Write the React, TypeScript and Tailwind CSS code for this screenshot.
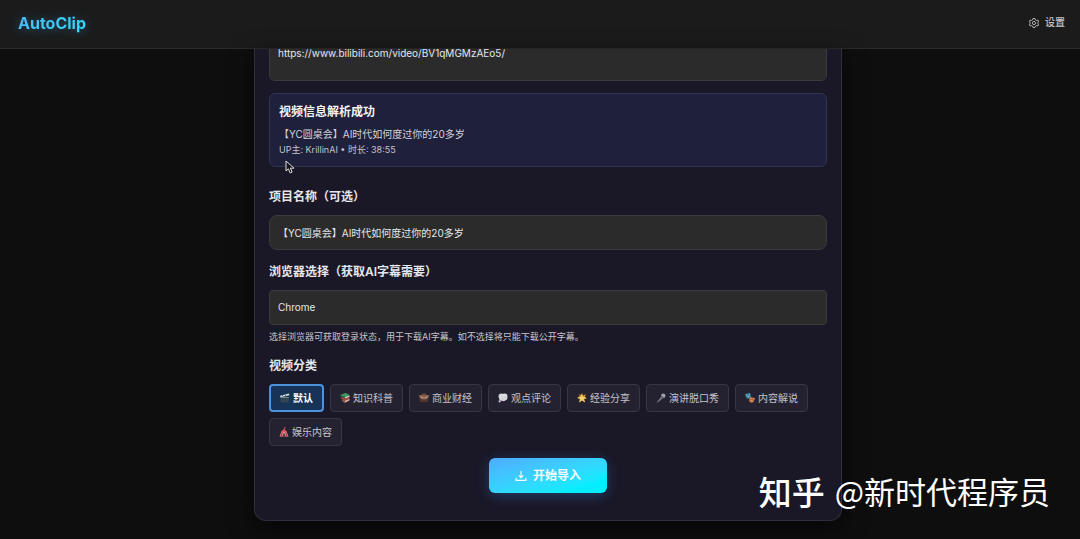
import type { ReactNode } from "react";

const field =
  "block w-full border border-[#3b3b3d] bg-[#2b2b2b] px-2 text-[10px] text-gray-200 outline-none";

function Icon({ children }: { children: ReactNode }) {
  return (
    <svg viewBox="0 0 18 18" className="h-[10px] w-[10px] shrink-0" aria-hidden="true">
      {children}
    </svg>
  );
}

const categories = [
  {
    name: "默认",
    icon: (
      <Icon>
        <path d="M0 5 16 1l1 3L1 8z" fill="#d5dce0" />
        <path d="m4 4 2 3m3-4 2 3" stroke="#34444f" strokeWidth="1.5" />
        <path d="M1 8h15v7l-2 2H3l-2-2z" fill="#33454e" />
        <path d="M1 8h15v1H1z" fill="#a9bcc2" />
      </Icon>
    ),
  },
  {
    name: "知识科普",
    icon: (
      <Icon>
        <path d="m1 3 9-3 7 3-8 4z" fill="#3f9d62" />
        <path d="m1 3 8 4v3L1 6z" fill="#2b7548" />
        <path d="m9 7 8-3v3l-8 3z" fill="#cfe0d2" />
        <path d="m2 7 7 3 8-3v3l-8 3-7-3z" fill="#b84b42" />
        <path d="m4 11 5 2 8-3v4l-8 4-5-3z" fill="#8b5a50" />
        <path d="m9 14 8-3v2l-8 4z" fill="#dbb5a0" />
      </Icon>
    ),
  },
  {
    name: "商业财经",
    icon: (
      <Icon>
        <path d="M6 4V2h6v2" fill="none" stroke="#6b483e" strokeWidth="2" />
        <path d="M0 4h18l-2 12H2z" fill="#54362f" />
        <path d="M0 4h18l-1 4-8 4-8-4z" fill="#94695c" />
        <path d="M4 7h2v3H4zm8 0h2v3h-2z" fill="#d0b491" />
      </Icon>
    ),
  },
  {
    name: "观点评论",
    icon: (
      <Icon>
        <circle cx="6" cy="6" r="5" fill="#d6d6dc" />
        <circle cx="12" cy="6" r="5" fill="#dedee4" />
        <circle cx="13" cy="9" r="4" fill="#d3d3da" />
        <circle cx="6" cy="10" r="4" fill="#d8d8df" />
        <circle cx="10" cy="11" r="4" fill="#d3d3da" />
        <circle cx="3" cy="15" r="2" fill="#d3d3da" />
      </Icon>
    ),
  },
  {
    name: "经验分享",
    icon: (
      <Icon>
        <path
          d="m9 0 2 5 5-3-2 5 4 3-5 1 2 6-6-4-5 4 1-6-5-2 5-3-2-4 4 2z"
          fill="#d99a38"
        />
        <path d="m9 2 2 5 6 1-5 3 2 6-5-4-5 4 2-6-5-3 6-1z" fill="#f5cf6a" />
      </Icon>
    ),
  },
  {
    name: "演讲脱口秀",
    icon: (
      <Icon>
        <path d="m1 17 9-11 3 3L3 17z" fill="#77777f" />
        <circle cx="13" cy="5" r="4" fill="#a2a2aa" />
        <path d="m9 5 4 4" stroke="#55555e" strokeWidth="2" />
      </Icon>
    ),
  },
  {
    name: "内容解说",
    icon: (
      <Icon>
        <path d="m0 2 9-2 2 7c-1 4-6 5-9 1z" fill="#36819f" />
        <path d="m2 4 2-1m3 0 2-1M4 7l4-1" stroke="#b8dce7" strokeWidth="1.2" />
        <path d="m9 7 9 2-2 6c-2 4-8 3-9-1z" fill="#b9673d" />
        <path d="m10 9 2 1m3 0 2 1m-7 3 4 1" stroke="#ffd298" strokeWidth="1.2" />
      </Icon>
    ),
  },
  {
    name: "娱乐内容",
    icon: (
      <Icon>
        <path d="M9 4V0l4 2-4 1" fill="#e15b62" />
        <path d="m9 3 6 6H3z" fill="#d75b60" />
        <path d="M4 9h10l3 8H1z" fill="#e39a98" />
        <path d="m5 9-3 8h3l2-8zm6 0 2 8h3l-3-8z" fill="#bd3f49" />
        <path d="m9 10 3 7H6z" fill="#563644" />
      </Icon>
    ),
  },
];

function Header() {
  return (
    <header className="flex h-[49px] items-center justify-between border-b border-[#2b2b2b] bg-[#1b1b1b] px-[15px] pb-[3px]">
      <a
        href="#"
        className="ml-[3px] bg-gradient-to-br from-[#50aef8] to-[#18e5f5] bg-clip-text text-[16px] leading-6 font-bold text-transparent drop-shadow-[0_1px_5px_rgba(60,170,255,0.4)]"
      >
        AutoClip
      </a>
      <button type="button" className="flex items-center gap-[6px] text-[10px] font-medium text-[#c4c4c4]">
        <svg
          viewBox="0 0 20 20"
          className="h-[10px] w-[10px]"
          fill="none"
          stroke="currentColor"
          strokeWidth="1.7"
          strokeLinejoin="round"
          aria-hidden="true"
        >
          <path d="M8 1h4l1 3 2 1 3-1 1 4-2 2 2 2-1 4-3-1-2 1-1 3H8l-1-3-2-1-3 1-1-4 2-2-2-2 1-4 3 1 2-1z" />
          <circle cx="10" cy="10" r="3.2" />
        </svg>
        设置
      </button>
    </header>
  );
}

export default function App() {
  return (
    <div className="relative min-h-screen overflow-hidden bg-[#0e0e0e] pb-[18px] font-['Inter','Noto_Sans_CJK_SC',sans-serif]">
      <Header />
      <main className="ml-4 flex justify-center">
        <form className="w-full max-w-[588px] rounded-b-xl border border-t-0 border-[#302e3e] bg-[#1a1726] px-[14px] pb-[27px] shadow-[0_8px_24px_rgba(0,0,0,0.6)]">
          {/* the link field is scrolled half under the header */}
          <div className="flex h-8 flex-col justify-end overflow-hidden">
            <textarea
              aria-label="视频链接"
              defaultValue="https://www.bilibili.com/video/BV1qMGMzAEo5/"
              className={`${field} h-12 shrink-0 resize-none rounded-md py-[11px] leading-4`}
            />
          </div>

          <section className="mt-3 rounded-md border border-[#303354] bg-[#1f203b] px-[9px] py-2">
            <h2 className="text-[12px] leading-5 font-semibold text-gray-100">视频信息解析成功</h2>
            <p className="mt-1 text-[10px] leading-4 text-[#d2d2da]">
              【YC圆桌会】AI时代如何度过你的20多岁
            </p>
            <p className="text-[9px] leading-4 text-[#c3c3ce]">UP主: KrillinAI • 时长: 38:55</p>
          </section>

          <label htmlFor="name" className="mt-5 block text-[12px] leading-5 font-semibold text-gray-200">
            项目名称（可选）
          </label>
          <input
            id="name"
            type="text"
            defaultValue="【YC圆桌会】AI时代如何度过你的20多岁"
            className={`${field} mt-2 h-[35px] rounded-lg`}
          />

          <label htmlFor="browser" className="mt-3 block text-[12px] leading-5 font-semibold text-gray-200">
            浏览器选择（获取AI字幕需要）
          </label>
          <select id="browser" className={`${field} mt-2 h-[35px] appearance-none rounded-sm`}>
            <option>Chrome</option>
          </select>
          <p className="mt-1 text-[9px] leading-4 text-[#c6c6cd]">
            选择浏览器可获取登录状态，用于下载AI字幕。如不选择将只能下载公开字幕。
          </p>

          <h3 className="mt-[11px] text-[12px] leading-5 font-semibold text-gray-200">视频分类</h3>
          <div className="mt-2 flex flex-wrap gap-[6px]">
            {categories.map((c, i) => (
              <button
                key={c.name}
                type="button"
                aria-pressed={i === 0}
                className={`flex h-7 items-center gap-[3px] rounded px-[9px] text-[10px] ${
                  i === 0
                    ? "border-2 border-[#4d91dc] bg-[#183358] font-semibold text-white"
                    : "border border-[#383645] bg-[#242230] text-[#c5c4cc]"
                }`}
              >
                {c.icon}
                {c.name}
              </button>
            ))}
          </div>

          <div className="mt-3 flex justify-center">
            <button
              type="submit"
              className="flex h-[35px] items-center gap-[6px] rounded-md bg-gradient-to-br from-[#4eabff] to-[#06edff] to-80% px-[26px] text-[12px] font-semibold text-white shadow-[0_3px_14px_rgba(50,150,255,0.3)]"
            >
              <svg
                viewBox="0 0 22 22"
                className="h-3 w-3"
                fill="none"
                stroke="currentColor"
                strokeWidth="2"
                aria-hidden="true"
              >
                <path d="M11 2v12m-4-4 4 4 4-4M2 14v5h18v-5" />
              </svg>
              开始导入
            </button>
          </div>
        </form>
      </main>

      <svg
        viewBox="0 0 10 14"
        className="absolute top-[160px] left-[285px] h-[14px] w-[10px]"
        aria-hidden="true"
      >
        <path
          d="M1 1v10l2.4-2.2L5.2 13l2-1-1.8-3.8H9z"
          fill="#15151d"
          stroke="#ddd"
          strokeWidth="1"
        />
      </svg>

      <p className="absolute right-[30px] bottom-6 flex items-center gap-[10px] font-['Noto_Sans_CJK_SC',sans-serif] text-[31px] leading-[48px] text-white">
        <span className="text-[33px] font-medium">知乎</span>
        <span>@新时代程序员</span>
      </p>
    </div>
  );
}
